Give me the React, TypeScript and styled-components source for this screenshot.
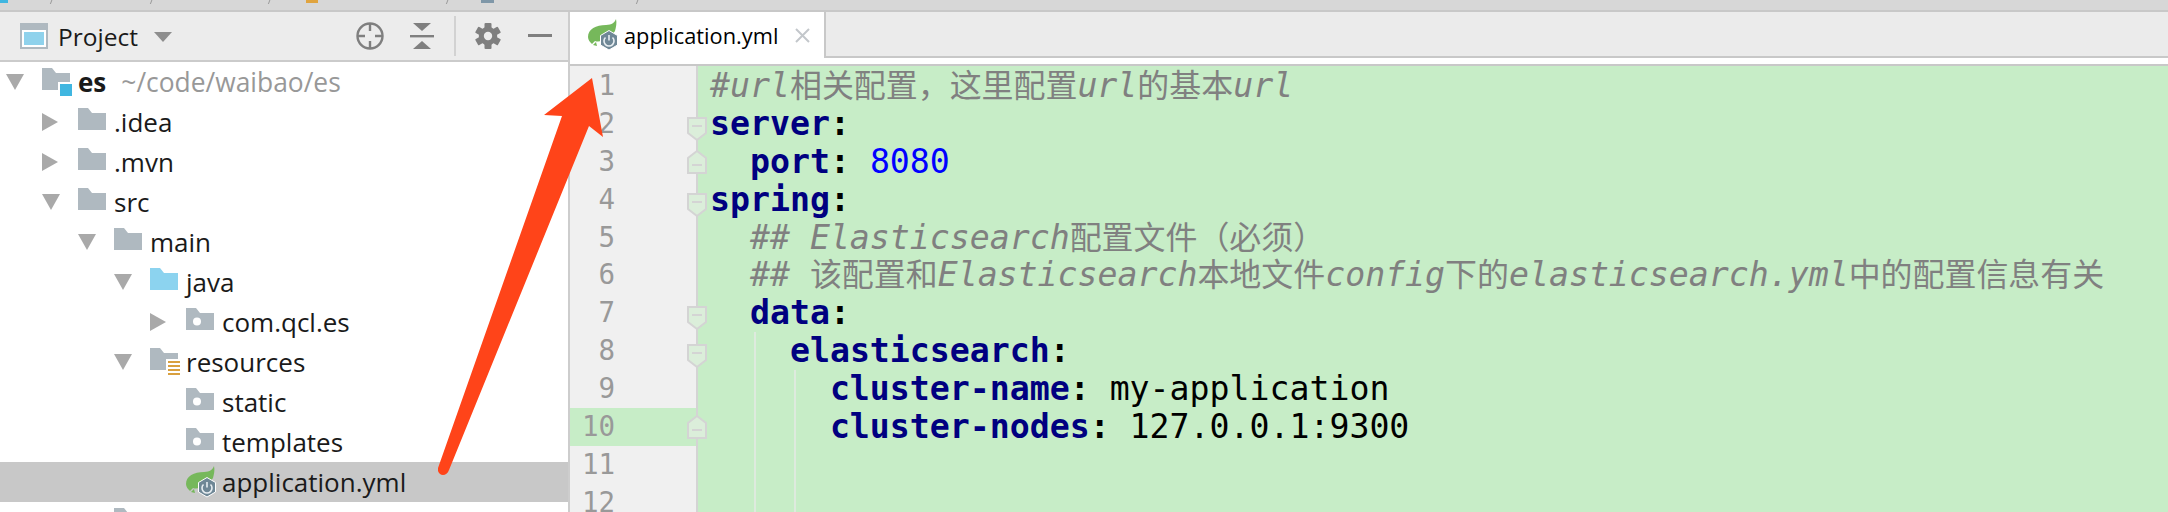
import { ReactNode } from "react";
import styled, { createGlobalStyle } from "styled-components";

const GlobalStyle = createGlobalStyle`
  html, body {
    margin: 0;
    padding: 0;
    height: 100%;
    overflow: hidden;
    background: #ffffff;
  }
`;

const Page = styled.div`
  position: relative;
  width: 2168px;
  height: 512px;
  overflow: hidden;
  font-family: "Open Sans", "Noto Sans", sans-serif;
`;

const Crumbs = styled.div`
  height: 10px;
  display: flex;
  background: #d7d7d7;
  border-bottom: 2px solid #c8c8c8;
  overflow: hidden;
`;

const Crumb = styled.div<{ $width: number }>`
  position: relative;
  width: ${({ $width }) => $width}px;
  flex-shrink: 0;

  &::after {
    content: "";
    position: absolute;
    right: 0;
    top: -2px;
    width: 1px;
    height: 6px;
    background: #9a9a9a;
    transform: skewX(-20deg);
  }
`;

const CrumbMark = styled.span<{ $color: string; $left: number; $width: number }>`
  position: absolute;
  top: 0;
  left: ${({ $left }) => $left}px;
  width: ${({ $width }) => $width}px;
  height: 2.5px;
  background: ${({ $color }) => $color};
`;

const Main = styled.div`
  display: flex;
  height: 500px;
`;

const ProjectPanel = styled.aside`
  width: 568px;
  flex-shrink: 0;
  border-right: 2px solid #cdcdcd;
  background: #ffffff;
`;

const PanelHeader = styled.header`
  height: 48px;
  display: flex;
  align-items: center;
  padding: 0 16px 0 20px;
  background: #ececec;
  border-bottom: 2px solid #cbcbcb;
`;

const PanelTitle = styled.span`
  margin-left: 10px;
  font-size: 24.5px;
  color: #1a1a1a;
`;

const Caret = styled.svg`
  margin-left: 16px;
  margin-top: 2px;
`;

const Tools = styled.div`
  margin-left: auto;
  display: flex;
  align-items: center;
`;

const ToolSlot = styled.div<{ $gap: number }>`
  display: flex;
  margin-left: ${({ $gap }) => $gap}px;
`;

const ToolSeparator = styled.div`
  width: 2px;
  height: 40px;
  margin-left: 20px;
  background: #d2d2d2;
`;

const Tree = styled.div`
  display: flex;
  flex-direction: column;
`;

const Row = styled.div<{ $level: number; $selected?: boolean }>`
  height: 40px;
  flex-shrink: 0;
  display: flex;
  align-items: center;
  padding-left: ${({ $level }) => 6 + 36 * $level}px;
  background: ${({ $selected }) => ($selected ? "#c8c8c8" : "transparent")};
`;

const Twisty = styled.div`
  width: 36px;
  flex-shrink: 0;
  display: flex;
  align-items: center;
`;

const Label = styled.span`
  margin-left: 6px;
  font-size: 26px;
  line-height: 40px;
  color: #1a1a1a;
  white-space: pre;
`;

const RootName = styled(Label)`
  font-weight: 700;
`;

const RootPath = styled.span`
  margin-left: 15px;
  font-size: 26.4px;
  color: #989898;
`;

const EditorPane = styled.section`
  flex: 1;
  min-width: 0;
  display: flex;
  flex-direction: column;
`;

const TabRow = styled.div`
  height: 46px;
  display: flex;
`;

const Tab = styled.div`
  width: 256px;
  display: flex;
  align-items: center;
  padding-left: 18px;
  box-sizing: border-box;
  background: #ffffff;
  border-right: 2px solid #c8c8c8;
`;

const TabTitle = styled.span`
  margin-left: 6px;
  font-size: 21.8px;
  color: #000000;
`;

const TabClose = styled.svg`
  margin-left: 17px;
`;

const TabFill = styled.div`
  flex: 1;
  background: #ebebeb;
  border-bottom: 2px solid #c8c8c8;
`;

const TabGap = styled.div`
  height: 6px;
  background: #ffffff;
  border-bottom: 2px solid #c8c8c8;
`;

const Lines = styled.div`
  flex: 1;
  padding-top: 1px;
  overflow: hidden;
  background: linear-gradient(
    to right,
    #f0f0f0 126px,
    #d4d4d4 126px,
    #d4d4d4 128px,
    #c7edc7 128px
  );
`;

const LineRow = styled.div`
  position: relative;
  height: 37.9px;
  display: flex;
  font-family: "DejaVu Sans Mono", monospace;
`;

const LineNumber = styled.div<{ $current?: boolean }>`
  width: 126px;
  flex-shrink: 0;
  box-sizing: border-box;
  padding-right: 81px;
  text-align: right;
  font-size: 27.5px;
  line-height: 37.9px;
  color: #999999;
  background: ${({ $current }) => ($current ? "#c7edc7" : "transparent")};
`;

const Code = styled.div`
  padding-left: 14px;
  font-size: 33.2px;
  line-height: 37.9px;
  white-space: pre;
`;

const Key = styled.span`
  color: #000080;
  font-weight: 700;
`;

const Colon = styled.span`
  color: #000000;
  font-weight: 700;
`;

const Plain = styled.span`
  color: #000000;
`;

const Num = styled.span`
  color: #0000ff;
`;

const Comment = styled.span`
  color: #808080;
  font-style: italic;
`;

const Cjk = styled.span`
  font-family: "Noto Sans CJK SC", sans-serif;
  font-style: normal;
  font-size: 31.95px;
  line-height: 30px;
`;

const Guide = styled.div<{ $depth: number }>`
  position: absolute;
  top: 0;
  bottom: 0;
  left: ${({ $depth }) => 184 + 40 * ($depth - 1)}px;
  width: 2px;
  background: #deeade;
`;

const FoldSlot = styled.svg<{ $up?: boolean }>`
  position: absolute;
  left: 117px;
  top: ${({ $up }) => ($up ? 7 : 12)}px;
`;

const ArrowOverlay = styled.svg`
  position: absolute;
  left: 0;
  top: 0;
  pointer-events: none;
`;

const FOLDER_PATH = "M0 0H10L14 5H28V22H0Z";

type FolderKind = "plain" | "source" | "package" | "resources" | "module";

const Folder = ({ kind = "plain" }: { kind?: FolderKind }) => (
  <svg width="30" height="28" viewBox="0 0 30 28" style={{ flexShrink: 0, overflow: "visible" }}>
    <path d={FOLDER_PATH} fill={kind === "source" ? "#8cd3ef" : "#afb9c0"} />
    {kind === "package" && <circle cx="11" cy="13.5" r="4" fill="#ffffff" />}
    {kind === "module" && (
      <>
        <rect x="16" y="14" width="14" height="14" fill="#ffffff" />
        <rect x="18" y="16" width="12" height="12" fill="#40b6e0" />
      </>
    )}
    {kind === "resources" && (
      <>
        <rect x="16" y="11" width="14" height="17" fill="#ffffff" />
        <rect x="18" y="13" width="12" height="2" fill="#d9a03f" />
        <rect x="18" y="17" width="12" height="2" fill="#d9a03f" />
        <rect x="18" y="21" width="12" height="2" fill="#d9a03f" />
        <rect x="18" y="25" width="12" height="2" fill="#d9a03f" />
      </>
    )}
  </svg>
);

const SpringIcon = () => (
  <svg width="30" height="32" viewBox="0 0 30 32" style={{ flexShrink: 0 }}>
    <path
      d="M28 0C27 3 24 6 18 6C8 6 0 10 0 18C0 21 2 23 4 25L7 22C12 24 22 20 27 12C28 8 29 4 28 0Z"
      fill="#76b85b"
    />
    <path d="M5 26L8 23L9 27Z" fill="#76b85b" />
    <path d="M21 11.5L29.5 16.5V26L21 31L12.5 26V16.5Z" fill="#6f8796" stroke="#ffffff" strokeWidth="1" />
    <path d="M17.5 18.5A5 5 0 1 0 24.5 18.5" fill="none" stroke="#e8eef2" strokeWidth="1.6" />
    <path d="M21 16V21.5" stroke="#e8eef2" strokeWidth="1.6" />
  </svg>
);

const TriangleDown = () => (
  <svg width="18" height="16" viewBox="0 0 18 16">
    <path d="M0 0H18L9 16Z" fill="#a9a9a9" />
  </svg>
);

const TriangleRight = () => (
  <svg width="16" height="18" viewBox="0 0 16 18">
    <path d="M0 0L16 9L0 18Z" fill="#a9a9a9" />
  </svg>
);

const Fold = ({ up }: { up?: boolean }) => (
  <FoldSlot $up={up} width="20" height="24" viewBox="0 0 20 24">
    <path
      d={up ? "M1 23V8L10 1L19 8V23Z" : "M1 1H19V16L10 23L1 16Z"}
      fill="#dbeeda"
      stroke="#d4d4d4"
      strokeWidth="2"
    />
    <path d={up ? "M5 15H15" : "M5 9H15"} stroke="#d4d4d4" strokeWidth="2" />
  </FoldSlot>
);

type TreeItem = {
  level: number;
  name?: string;
  open?: boolean;
  leaf?: boolean;
  kind?: FolderKind;
};

const treeItems: TreeItem[] = [
  { level: 1, name: ".idea" },
  { level: 1, name: ".mvn" },
  { level: 1, name: "src", open: true },
  { level: 2, name: "main", open: true },
  { level: 3, name: "java", open: true, kind: "source" },
  { level: 4, name: "com.qcl.es", kind: "package" },
  { level: 3, name: "resources", open: true, kind: "resources" },
  { level: 4, name: "static", leaf: true, kind: "package" },
  { level: 4, name: "templates", leaf: true, kind: "package" },
];

type CodeLine = {
  content?: ReactNode;
  fold?: "down" | "up";
  guides?: number;
};

const codeLines: CodeLine[] = [
  {
    content: (
      <Comment>
        #url<Cjk>相关配置，这里配置</Cjk>url<Cjk>的基本</Cjk>url
      </Comment>
    ),
  },
  {
    fold: "down",
    content: (
      <>
        <Key>server</Key>
        <Colon>:</Colon>
      </>
    ),
  },
  {
    fold: "up",
    content: (
      <>
        {"  "}
        <Key>port</Key>
        <Colon>:</Colon> <Num>8080</Num>
      </>
    ),
  },
  {
    fold: "down",
    content: (
      <>
        <Key>spring</Key>
        <Colon>:</Colon>
      </>
    ),
  },
  {
    content: (
      <Comment>
        {"  ## Elasticsearch"}
        <Cjk>配置文件（必须）</Cjk>
      </Comment>
    ),
  },
  {
    content: (
      <Comment>
        {"  ## "}
        <Cjk>该配置和</Cjk>Elasticsearch<Cjk>本地文件</Cjk>config<Cjk>下的</Cjk>elasticsearch.yml
        <Cjk>中的配置信息有关</Cjk>
      </Comment>
    ),
  },
  {
    fold: "down",
    content: (
      <>
        {"  "}
        <Key>data</Key>
        <Colon>:</Colon>
      </>
    ),
  },
  {
    fold: "down",
    guides: 1,
    content: (
      <>
        {"    "}
        <Key>elasticsearch</Key>
        <Colon>:</Colon>
      </>
    ),
  },
  {
    guides: 2,
    content: (
      <>
        {"      "}
        <Key>cluster-name</Key>
        <Colon>:</Colon> <Plain>my-application</Plain>
      </>
    ),
  },
  {
    fold: "up",
    guides: 2,
    content: (
      <>
        {"      "}
        <Key>cluster-nodes</Key>
        <Colon>:</Colon> <Plain>127.0.0.1:9300</Plain>
      </>
    ),
  },
  { guides: 2 },
  { guides: 2 },
];

const App = () => {
  return (
    <Page>
      <GlobalStyle />
      <Crumbs>
        <Crumb $width={52}>
          <CrumbMark $color="#40b6e0" $left={0} $width={8} />
        </Crumb>
        <Crumb $width={100} />
        <Crumb $width={118} />
        <Crumb $width={178}>
          <CrumbMark $color="#e0a43f" $left={36} $width={12} />
        </Crumb>
        <Crumb $width={190}>
          <CrumbMark $color="#7f97a8" $left={33} $width={13} />
        </Crumb>
      </Crumbs>
      <Main>
        <ProjectPanel>
          <PanelHeader>
            <svg width="28" height="26" viewBox="0 0 28 26">
              <rect width="28" height="26" fill="#afb9c0" />
              <rect x="2" y="7" width="24" height="17" fill="#ffffff" />
              <rect x="4" y="9" width="20" height="13" fill="#8fd2ec" />
            </svg>
            <PanelTitle>Project</PanelTitle>
            <Caret width="18" height="10" viewBox="0 0 18 10">
              <path d="M0 0H18L9 10Z" fill="#8e8e8e" />
            </Caret>
            <Tools>
              <ToolSlot $gap={0}>
                <svg width="28" height="28" viewBox="0 0 28 28">
                  <circle cx="14" cy="14" r="12.5" fill="none" stroke="#7f7f7f" strokeWidth="2.4" />
                  <path d="M14 2V9M14 19V26M2 14H9M19 14H26" stroke="#7f7f7f" strokeWidth="2.4" />
                </svg>
              </ToolSlot>
              <ToolSlot $gap={26}>
                <svg width="24" height="26" viewBox="0 0 24 26">
                  <path d="M3 0H21L12 8Z" fill="#7f7f7f" />
                  <rect y="12" width="24" height="2.4" fill="#7f7f7f" />
                  <path d="M12 18L21 26H3Z" fill="#7f7f7f" />
                </svg>
              </ToolSlot>
              <ToolSeparator />
              <ToolSlot $gap={19}>
                <svg width="26" height="26" viewBox="0 0 26 26">
                  <g fill="#7f7f7f">
                    <rect x="9.5" y="0" width="7" height="26" rx="1" />
                    <rect x="9.5" y="0" width="7" height="26" rx="1" transform="rotate(60 13 13)" />
                    <rect x="9.5" y="0" width="7" height="26" rx="1" transform="rotate(120 13 13)" />
                  </g>
                  <circle cx="13" cy="13" r="7" fill="none" stroke="#7f7f7f" strokeWidth="4.5" />
                  <circle cx="13" cy="13" r="4.2" fill="#ececec" />
                </svg>
              </ToolSlot>
              <ToolSlot $gap={27}>
                <svg width="24" height="4" viewBox="0 0 24 4">
                  <rect width="24" height="3" fill="#7f7f7f" />
                </svg>
              </ToolSlot>
            </Tools>
          </PanelHeader>
          <Tree>
            <Row $level={0}>
              <Twisty>
                <TriangleDown />
              </Twisty>
              <Folder kind="module" />
              <RootName>es</RootName>
              <RootPath>~/code/waibao/es</RootPath>
            </Row>
            {treeItems.map((item) => (
              <Row key={item.name} $level={item.level}>
                <Twisty>{item.leaf ? null : item.open ? <TriangleDown /> : <TriangleRight />}</Twisty>
                <Folder kind={item.kind} />
                <Label>{item.name}</Label>
              </Row>
            ))}
            <Row $level={4} $selected>
              <Twisty />
              <SpringIcon />
              <Label>application.yml</Label>
            </Row>
            <Row $level={2}>
              <Twisty />
              <Folder />
            </Row>
          </Tree>
        </ProjectPanel>
        <EditorPane>
          <TabRow>
            <Tab>
              <SpringIcon />
              <TabTitle>application.yml</TabTitle>
              <TabClose width="15" height="15" viewBox="0 0 15 15">
                <path d="M1 1L14 14M14 1L1 14" stroke="#c3c7cb" strokeWidth="2" />
              </TabClose>
            </Tab>
            <TabFill />
          </TabRow>
          <TabGap />
          <Lines>
            {codeLines.map((line, i) => (
              <LineRow key={i}>
                <LineNumber $current={i === 9}>{i + 1}</LineNumber>
                <Code>{line.content}</Code>
                {line.guides && line.guides >= 1 ? <Guide $depth={1} /> : null}
                {line.guides && line.guides >= 2 ? <Guide $depth={2} /> : null}
                {line.fold ? <Fold up={line.fold === "up"} /> : null}
              </LineRow>
            ))}
            <LineRow>
              <Guide $depth={1} />
              <Guide $depth={2} />
            </LineRow>
          </Lines>
        </EditorPane>
      </Main>
      <ArrowOverlay width="2168" height="512" viewBox="0 0 2168 512">
        <path
          d="M592 78L603 137L589 126L449 470C447 476 440 477 438 471L438 468L562 116L544 115Z"
          fill="#ff4419"
        />
      </ArrowOverlay>
    </Page>
  );
};

export default App;
